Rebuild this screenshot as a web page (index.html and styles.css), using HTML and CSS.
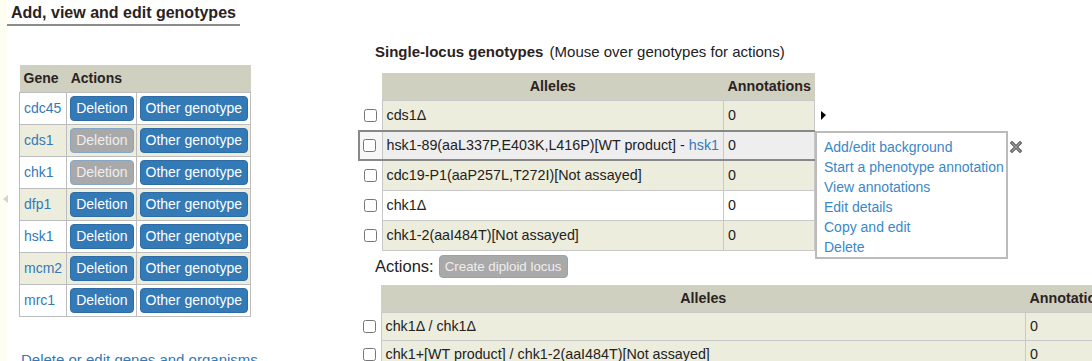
FILE: index.html
```html
<!DOCTYPE html>
<html lang="en">
<head>
    <meta charset="UTF-8">
    <title>Genotypes</title>
    <link rel="stylesheet" href="styles.css">
</head>
<body>
    <div class="page">
        <!-- Side panel toggle -->
        <div class="side-strip"><span class="side-toggle"></span></div>

        <div class="main">
            <h2 class="section-title">Add, view and edit genotypes</h2>

            <div class="columns">
                <!-- Genes list -->
                <div class="gene-panel">
                    <table class="gene-table">
                        <thead>
                            <tr><th>Gene</th><th colspan="2">Actions</th></tr>
                        </thead>
                        <tbody>
                            <tr><td><a href="#">cdc45</a></td><td><button class="btn">Deletion</button></td><td><button class="btn">Other genotype</button></td></tr>
                            <tr><td><a href="#">cds1</a></td><td><button class="btn btn-disabled">Deletion</button></td><td><button class="btn">Other genotype</button></td></tr>
                            <tr><td><a href="#">chk1</a></td><td><button class="btn btn-disabled">Deletion</button></td><td><button class="btn">Other genotype</button></td></tr>
                            <tr><td><a href="#">dfp1</a></td><td><button class="btn">Deletion</button></td><td><button class="btn">Other genotype</button></td></tr>
                            <tr><td><a href="#">hsk1</a></td><td><button class="btn">Deletion</button></td><td><button class="btn">Other genotype</button></td></tr>
                            <tr><td><a href="#">mcm2</a></td><td><button class="btn">Deletion</button></td><td><button class="btn">Other genotype</button></td></tr>
                            <tr><td><a href="#">mrc1</a></td><td><button class="btn">Deletion</button></td><td><button class="btn">Other genotype</button></td></tr>
                        </tbody>
                    </table>
                    <a class="edit-genes" href="#">Delete or edit genes and organisms</a>
                </div>

                <!-- Genotype lists -->
                <div class="genotype-panel">
                    <div class="panel-title"><b>Single-locus genotypes</b> (Mouse over genotypes for actions)</div>

                    <table class="genotype-table single">
                        <thead>
                            <tr><th class="check"></th><th>Alleles</th><th>Annotations</th></tr>
                        </thead>
                        <tbody>
                            <tr class="cream"><td class="check"><input type="checkbox"></td><td>cds1&Delta;</td><td>0</td></tr>
                            <tr class="hover"><td class="check"><input type="checkbox"></td><td>hsk1-89(aaL337P,E403K,L416P)[WT product] - <a href="#">hsk1</a></td><td>0</td></tr>
                            <tr class="cream"><td class="check"><input type="checkbox"></td><td>cdc19-P1(aaP257L,T272I)[Not assayed]</td><td>0</td></tr>
                            <tr><td class="check"><input type="checkbox"></td><td>chk1&Delta;</td><td>0</td></tr>
                            <tr class="cream"><td class="check"><input type="checkbox"></td><td>chk1-2(aaI484T)[Not assayed]</td><td>0</td></tr>
                        </tbody>
                    </table>

                    <div class="actions">
                        <span>Actions:</span>
                        <button class="btn btn-small btn-disabled">Create diploid locus</button>
                    </div>

                    <table class="genotype-table diploid">
                        <thead>
                            <tr><th class="check"></th><th>Alleles</th><th class="annot">Annotations</th></tr>
                        </thead>
                        <tbody>
                            <tr class="cream"><td class="check"><input type="checkbox"></td><td>chk1&Delta; / chk1&Delta;</td><td>0</td></tr>
                            <tr class="cream"><td class="check"><input type="checkbox"></td><td>chk1+[WT product] / chk1-2(aaI484T)[Not assayed]</td><td>0</td></tr>
                        </tbody>
                    </table>

                    <!-- Hover menu for the selected genotype -->
                    <span class="row-pointer"></span>
                    <div class="genotype-menu">
                        <a href="#">Add/edit background</a>
                        <a href="#">Start a phenotype annotation</a>
                        <a href="#">View annotations</a>
                        <a href="#">Edit details</a>
                        <a href="#">Copy and edit</a>
                        <a href="#">Delete</a>
                    </div>
                    <svg class="menu-close" width="12" height="12" viewBox="0 0 12 12">
                        <path d="M2 2 L10 10 M10 2 L2 10" stroke="#555" stroke-width="3.2" stroke-linecap="square"/>
                        <path d="M2 2 L10 10 M10 2 L2 10" stroke="#999" stroke-width="1.4" stroke-linecap="square"/>
                    </svg>
                </div>
            </div>
        </div>
    </div>
</body>
</html>
```

FILE: styles.css
```css
/* Reset */
* {
    margin: 0;
    padding: 0;
    box-sizing: border-box;
}

body {
    font-family: "Liberation Sans", Arial, sans-serif;
    font-size: 14px;
    color: #333;
    background-color: #fff;
    overflow: hidden;
}

a {
    color: #337ab7;
    text-decoration: none;
}

.page {
    display: flex;
    height: 361px;
}

/* Left side strip */
.side-strip {
    flex: 0 0 7px;
    background-color: #fdfdf2;
    position: relative;
}

.side-toggle {
    position: absolute;
    left: 3px;
    top: 195px;
    border-right: 5px solid #d4d4d4;
    border-top: 4px solid transparent;
    border-bottom: 4px solid transparent;
}

.main {
    flex: 1;
}

.section-title {
    display: inline-block;
    font-size: 16px;
    line-height: 19px;
    color: #2b2222;
    padding: 3px 4px 2px;
    border-bottom: 2px solid #8c8c8c;
}

.columns {
    display: flex;
}

/* Genes */
.gene-panel {
    flex: 0 0 351px;
    padding: 39px 0 0 12px;
}

.gene-table {
    border-collapse: collapse;
}

.gene-table th {
    background-color: #d0d0c0;
    text-align: left;
    padding: 5px 4px 5px 4px;
    line-height: 17px;
    color: #2b2222;
}

.gene-table td {
    border: 1px solid #bdbdbd;
    padding: 3px 2px 3px 3px;
    vertical-align: middle;
}

.gene-table td:first-child {
    padding: 3px 4px 5px 4px;
}

.gene-table tbody tr:nth-child(even) {
    background-color: #ededdd;
}

.btn {
    display: block;
    font-family: inherit;
    font-size: 14px;
    line-height: 17px;
    padding: 3px 5px;
    color: #fff;
    background-color: #337ab7;
    border: 1px solid #2e6da4;
    border-radius: 4px;
    cursor: pointer;
}

.btn-disabled {
    background-color: #a9a9a9;
    border-color: #86a6c6;
    color: #eee;
    cursor: default;
}

.edit-genes {
    display: block;
    margin-top: 34px;
    margin-left: 2px;
    font-size: 15px;
}

/* Genotypes */
.genotype-panel {
    flex: 1;
    position: relative;
}

.panel-title {
    margin-top: 16px;
    padding-left: 17px;
    font-size: 15px;
    line-height: 20px;
    color: #222;
}

.panel-title b {
    color: #2b2222;
    margin-right: 2px;
}

.genotype-table {
    border-collapse: collapse;
    margin-top: 11px;
    font-size: 14.3px;
}

.genotype-table th {
    background-color: #d0d0c0;
    padding: 5px 4px;
    line-height: 17px;
    text-align: center;
    color: #2b2222;
}

.genotype-table td {
    border: 1px solid #c8c8c8;
    padding: 6px 4px;
    line-height: 17px;
    color: #222;
}

.genotype-table th.check {
    background-color: transparent;
    padding: 0;
    width: 23px;
}

.genotype-table td.check {
    border: none;
    padding: 0 0 0 5px;
    background-color: #fff;
}

.genotype-table input[type="checkbox"] {
    display: block;
    width: 13px;
    height: 13px;
    margin: 0;
}

.genotype-table tr.cream td {
    background-color: #ededdd;
}

.genotype-table tr.cream td.check {
    background-color: #fff;
}

.genotype-table tr.hover td {
    background-color: #eee;
    border-top: 2px solid #888;
    border-bottom: 2px solid #888;
    padding: 5px 4px;
}

.genotype-table tr.hover td.check {
    border-left: 2px solid #888;
    background-color: #f7f7f7;
    padding: 0 0 0 3px;
}

.diploid {
    width: 760px;
    margin-top: 7px;
}

.diploid td {
    padding: 5px 4px;
}

.diploid th.annot {
    width: 92px;
    text-align: left;
}

.actions {
    display: flex;
    align-items: center;
    gap: 5px;
    margin-top: 4px;
    padding-left: 17px;
    font-size: 16.5px;
    color: #222;
}

.btn-small {
    font-size: 13.3px;
    padding: 3px 5px;
    line-height: 15px;
}

/* Hover menu */
.row-pointer {
    position: absolute;
    left: 463px;
    top: 85px;
    border-left: 5px solid #000;
    border-top: 4px solid transparent;
    border-bottom: 5px solid transparent;
}

.genotype-menu {
    position: absolute;
    left: 457px;
    top: 105px;
    width: 193px;
    height: 128px;
    background-color: #fff;
    border: 2px solid #bbb;
    padding: 4px 0 0 7px;
}

.genotype-menu a {
    display: block;
    line-height: 20px;
    color: #3a87c8;
}

.menu-close {
    position: absolute;
    left: 652px;
    top: 115px;
}
```
